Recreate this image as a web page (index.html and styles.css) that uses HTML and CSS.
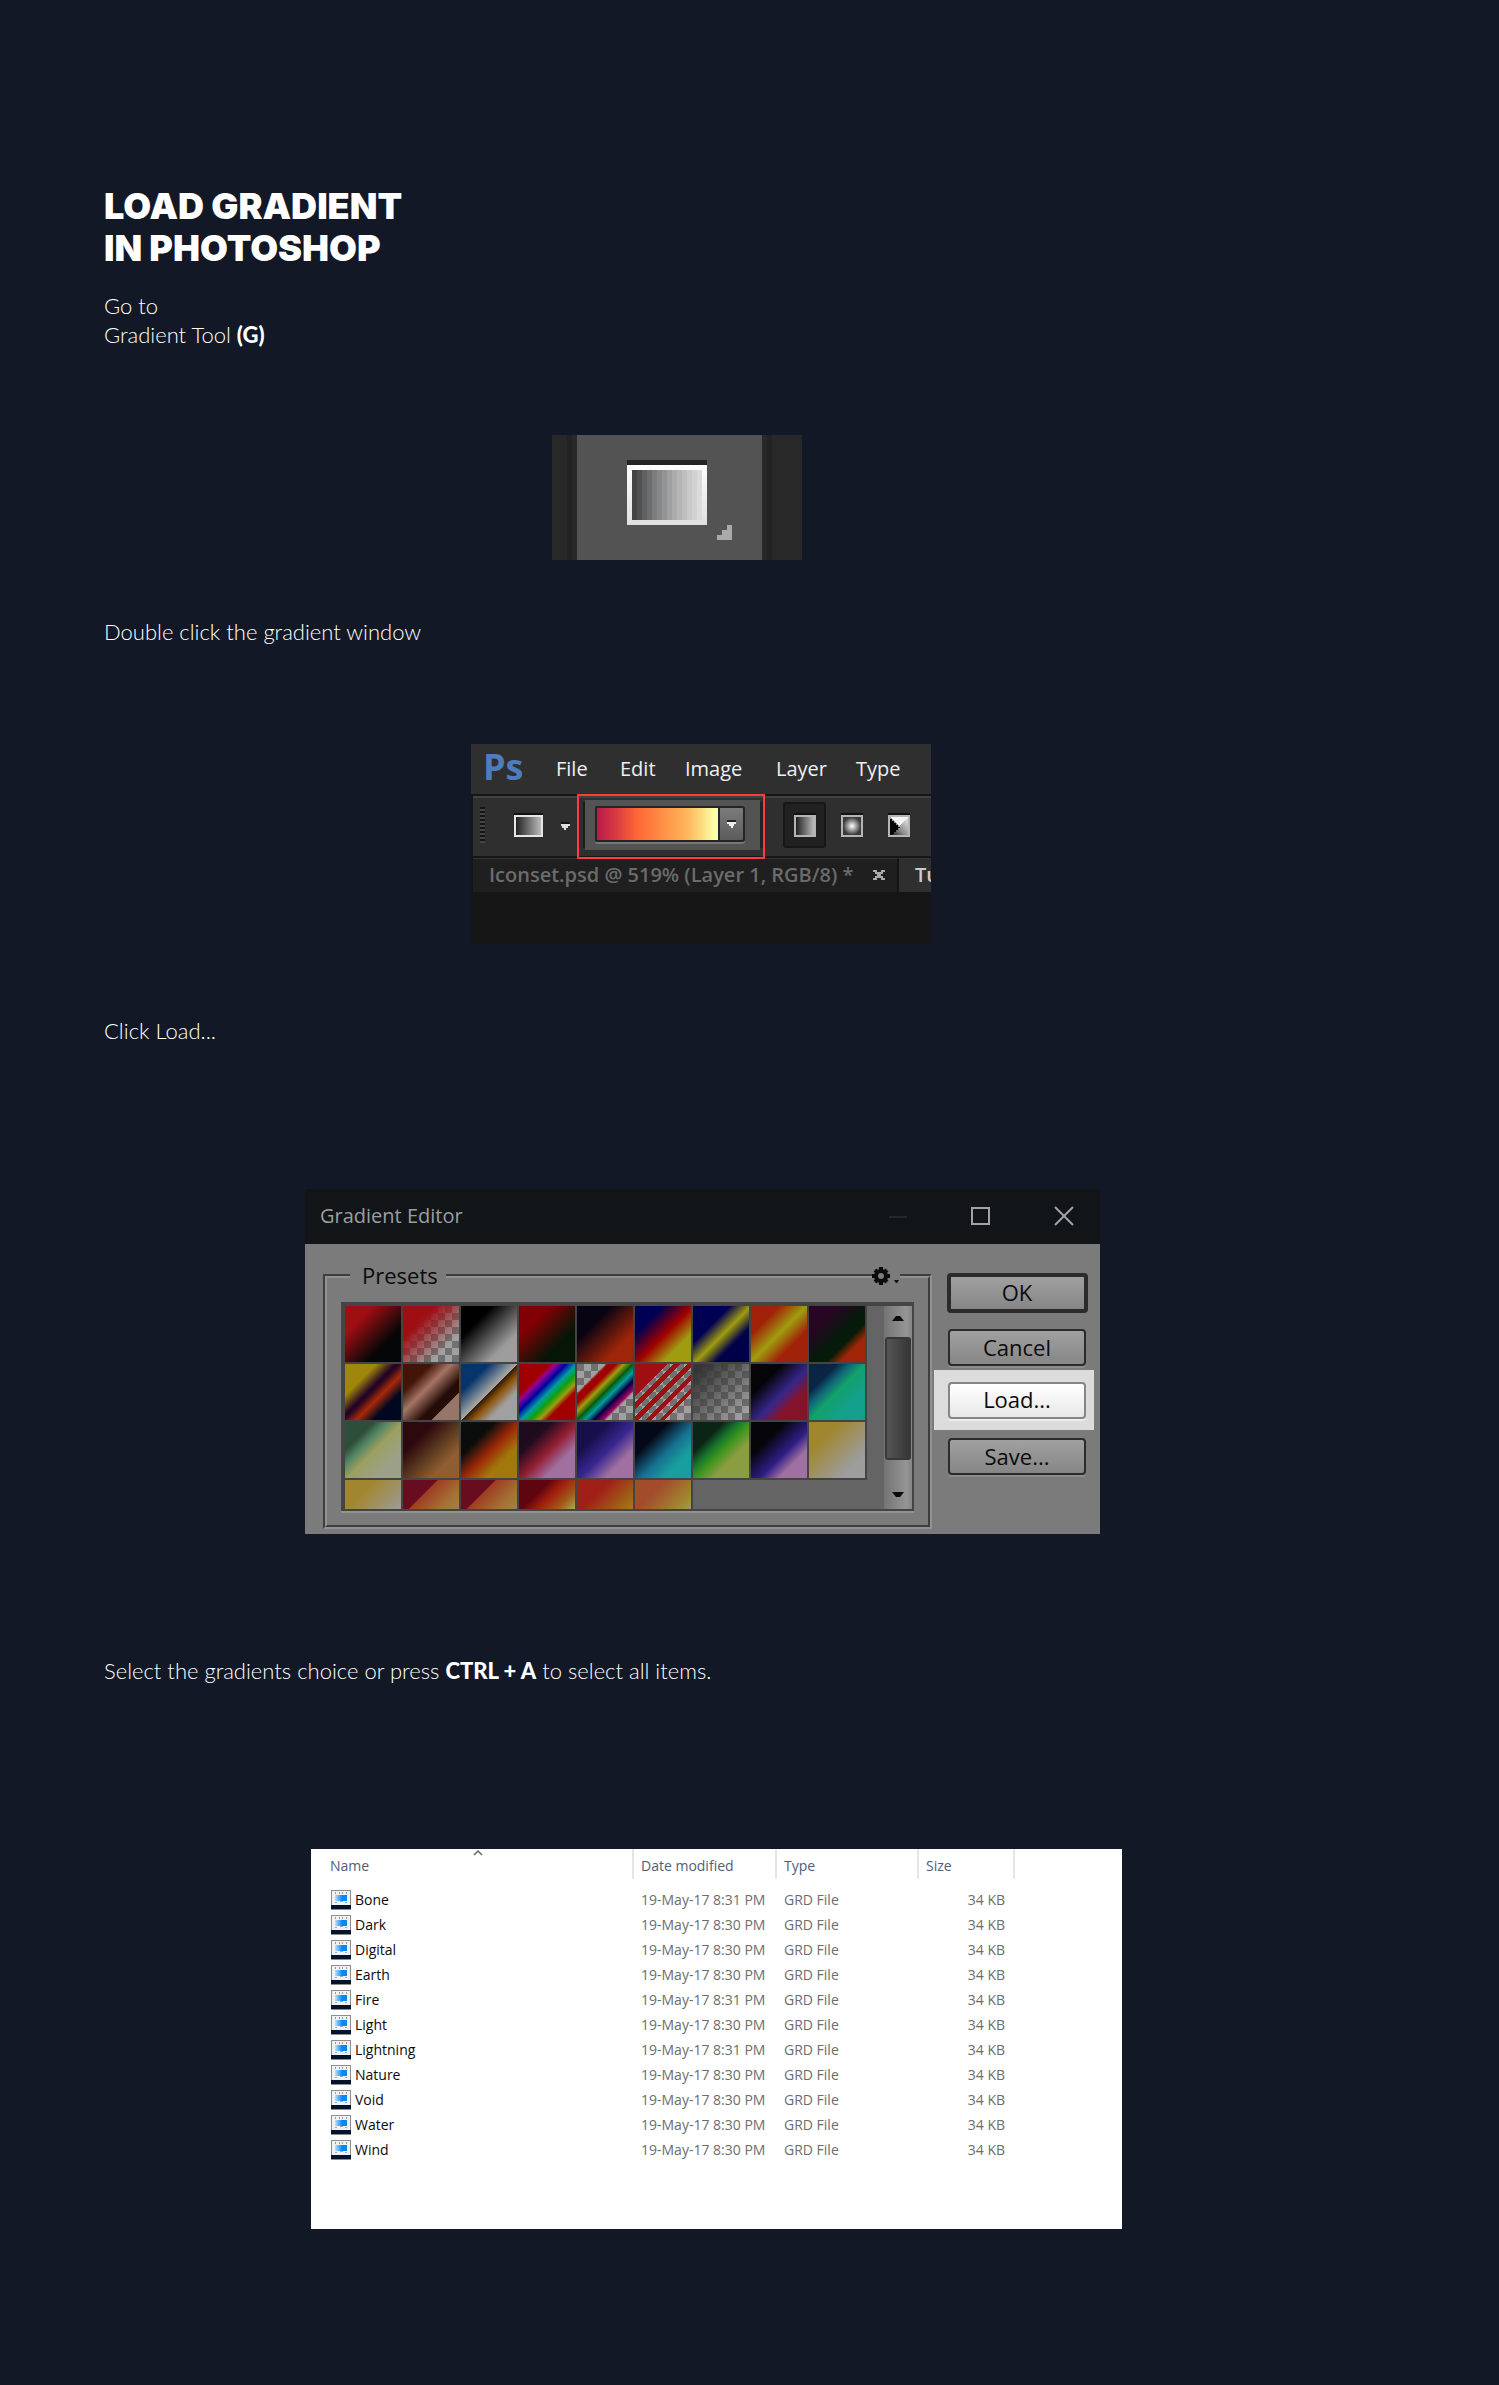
FILE: index.html
```html
<!DOCTYPE html>
<html lang="en">
<head>
<meta charset="utf-8">
<meta name="viewport" content="width=device-width, initial-scale=1">
<title>Load gradient in Photoshop</title>
<link rel="stylesheet" href="styles.css">
</head>
<body>
<main class="guide">
  <h1 class="title">LOAD GRADIENT<br>IN PHOTOSHOP</h1>
  <p class="step">Go to<br>Gradient Tool <strong>(G)</strong></p>

  <figure class="shot tool">
    <svg viewBox="0 0 50 25" shape-rendering="crispEdges" role="img" aria-label="Gradient tool">
      <defs><linearGradient id="frame" x1="0" y1="0" x2="0" y2="1"><stop offset="0" stop-color="#fdfdfd"/><stop offset="1" stop-color="#e0e0e0"/></linearGradient></defs>
      <path fill="#282828" d="M0 0h50v25H0z"/>
      <path fill="#232323" d="M3 0h1v25H3zM43 0h1v25h-1z"/>
      <path fill="#535353" d="M5 0h37v25H5z"/>
      <path fill="#232323" d="M15 5h16v1H15z"/>
      <path fill="url(#frame)" d="M15 6h16v12H15z"/>
      <path fill="#444446" d="M16 7h1v10h-1z"/><path fill="#515152" d="M17 7h1v10h-1z"/>
      <path fill="#5f6061" d="M18 7h1v10h-1z"/><path fill="#6d6e6f" d="M19 7h1v10h-1z"/>
      <path fill="#7b7c7d" d="M20 7h1v10h-1z"/><path fill="#878889" d="M21 7h1v10h-1z"/>
      <path fill="#939495" d="M22 7h1v10h-1z"/><path fill="#9fa0a1" d="M23 7h1v10h-1z"/>
      <path fill="#abacac" d="M24 7h1v10h-1z"/><path fill="#b5b5b5" d="M25 7h1v10h-1z"/>
      <path fill="#bfbfbf" d="M26 7h1v10h-1z"/><path fill="#c9c9c9" d="M27 7h1v10h-1z"/>
      <path fill="#d2d2d2" d="M28 7h1v10h-1z"/><path fill="#dbdbdb" d="M29 7h1v10h-1z"/>
      <path fill="#aaaaaa" d="M35 18h1v3h-3v-1h1v-1h1z"/>
    </svg>
  </figure>

  <p class="step">Double click the gradient window</p>

  <figure class="shot photoshop">
    <nav class="ps-menu" aria-label="Menu bar">
      <span class="ps-logo">Ps</span>
      <a href="#file">File</a><a href="#edit">Edit</a><a href="#image">Image</a><a href="#layer">Layer</a><a href="#type">Type</a>
    </nav>
    <div class="ps-options">
      <span class="grip"></span>
      <button class="icon-btn preset" type="button" aria-label="Gradient tool presets">
        <svg width="58" height="24" viewBox="0 0 58 24" shape-rendering="crispEdges">
          <defs><linearGradient id="dl"><stop offset="0" stop-color="#222"/><stop offset="1" stop-color="#bbb"/></linearGradient></defs>
          <path fill="#111" d="M0 0h29v2H0z"/><path fill="#e6e6e6" d="M0 2h29v22H0z"/><path fill="url(#dl)" d="M2 4h25v18H2z"/>
          <path fill="#151515" d="M47 9h9v2h-9z"/><path fill="#ddd" d="M47 11h9v2h-2v2h-2v2h-2v-2h-2v-2h-1z"/>
        </svg>
      </button>
      <div class="picker">
        <button class="ramp" type="button" aria-label="Edit gradient"></button>
        <button class="ramp-menu" type="button" aria-label="Choose gradient">
          <svg width="9" height="8" viewBox="0 0 9 8" shape-rendering="crispEdges"><path fill="#222" d="M0 0h9v2H0z"/><path fill="#eee" d="M0 2h9v2H7v2H6v2H4V6H2V4H0z"/></svg>
        </button>
      </div>
      <button class="icon-btn kind selected" type="button" aria-label="Linear gradient">
        <svg width="22" height="24" viewBox="0 0 22 24" shape-rendering="crispEdges"><path fill="#111" d="M0 0h22v2H0z"/><path fill="#b5b5b5" d="M0 2h22v22H0z"/><path fill="url(#dl)" d="M2 4h18v18H2z"/></svg>
      </button>
      <button class="icon-btn kind" type="button" aria-label="Radial gradient">
        <svg width="22" height="24" viewBox="0 0 22 24" shape-rendering="crispEdges"><defs><radialGradient id="rg"><stop offset="0" stop-color="#fff"/><stop offset="1" stop-color="#3a3a3a"/></radialGradient></defs><path fill="#111" d="M0 0h22v2H0z"/><path fill="#b5b5b5" d="M0 2h22v22H0z"/><path fill="url(#rg)" d="M2 4h18v18H2z"/></svg>
      </button>
      <button class="icon-btn kind" type="button" aria-label="Angle gradient">
        <svg width="22" height="24" viewBox="0 0 22 24" shape-rendering="crispEdges"><defs><linearGradient id="ag" x1="0" y1="1" x2="1" y2="0"><stop offset="0" stop-color="#111"/><stop offset=".4" stop-color="#888"/><stop offset="1" stop-color="#eee"/></linearGradient></defs><path fill="#111" d="M0 0h22v2H0z"/><path fill="#b5b5b5" d="M0 2h22v22H0z"/><path fill="url(#ag)" d="M2 4h18v18H2z"/><path fill="#f4f4f4" d="M2 4h18l-9 9z"/><path fill="#080808" d="M2 6h2v2h2v2h2v2h2v2h2v1h-2v2H8v2H6v2H4v1H2z"/></svg>
      </button>
      <span class="callout"></span>
    </div>
    <div class="ps-tabs">
      <div class="doc-tab"><span>Iconset.psd @ 519% (Layer 1, RGB/8) *</span>
        <button class="tab-close" type="button" aria-label="Close document"><svg width="12" height="10" viewBox="0 0 12 10" shape-rendering="crispEdges"><path fill="#aaa" d="M0 0h4v2h4V0h4v2h-2v2H8v2h2v2h2v2H8V8H4v2H0V8h2V6h2V4H2V2H0z"/></svg></button>
      </div>
      <div class="doc-tab current"><span>Tu</span></div>
    </div>
  </figure>

  <p class="step">Click Load...</p>

  <figure class="shot editor">
    <header class="editor-bar">
      <span>Gradient Editor</span>
      <div class="window-controls">
        <svg width="20" height="20" viewBox="0 0 20 20" shape-rendering="crispEdges"><path fill="#23282a" d="M1 10h18v2H1z"/></svg>
        <svg width="20" height="20" viewBox="0 0 20 20" shape-rendering="crispEdges"><path fill="none" stroke="#a0a2a3" stroke-width="2" d="M1 2h17v16H1z"/></svg>
        <svg width="20" height="20" viewBox="0 0 20 20"><path fill="none" stroke="#a0a2a3" stroke-width="2" d="M1 1l18 18M19 1L1 19"/></svg>
      </div>
    </header>
    <div class="editor-body">
      <fieldset class="presets">
        <legend>Presets</legend>
        <button class="gear" type="button" aria-label="Preset options">
          <svg width="28" height="20" viewBox="0 0 28 20"><path fill="none" stroke="#0b0b0b" stroke-width="4" d="M9 4a5 5 0 1 1 0 10a5 5 0 1 1 0-10z"/><path stroke="#0b0b0b" stroke-width="4" d="M9 0v3M9 15v3M0 9h3M15 9h3M3 3l2 2M13 13l2 2M15 3l-2 2M5 13l-2 2"/><path fill="#0b0b0b" d="M22 13h5l-2 3h-1z"/></svg>
        </button>
        <div class="swatch-box">
          <ul class="swatches" aria-label="Gradient presets">
            <li class="g1"></li><li class="g2"></li><li class="g3"></li><li class="g4"></li><li class="g5"></li><li class="g6"></li><li class="g7"></li><li class="g8"></li><li class="g9"></li>
            <li class="g10"></li><li class="g11"></li><li class="g12"></li><li class="g13"></li><li class="g14"></li><li class="g15"></li><li class="g16"></li><li class="g17"></li><li class="g18"></li>
            <li class="g19"></li><li class="g20"></li><li class="g21"></li><li class="g22"></li><li class="g23"></li><li class="g24"></li><li class="g25"></li><li class="g26"></li><li class="g27"></li>
            <li class="g27"></li><li class="g28"></li><li class="g28"></li><li class="g29"></li><li class="g30"></li><li class="g31"></li>
          </ul>
          <div class="scrollbar">
            <svg width="12" height="6" viewBox="0 0 12 6"><path fill="#0b0b0b" d="M0 6l4-5h4l4 5z"/></svg>
            <span class="thumb"></span>
            <svg width="12" height="6" viewBox="0 0 12 6"><path fill="#0b0b0b" d="M0 0l4 5h4l4-5z"/></svg>
          </div>
        </div>
      </fieldset>
      <div class="actions">
        <button class="btn default" type="button">OK</button>
        <button class="btn" type="button">Cancel</button>
        <div class="spot"><button class="btn" type="button">Load...</button></div>
        <button class="btn" type="button">Save...</button>
      </div>
    </div>
  </figure>

  <p class="step">Select the gradients choice or press <strong>CTRL + A</strong> to select all items.</p>

  <svg class="symbols" aria-hidden="true">
    <defs>
      <linearGradient id="blue"><stop offset="0" stop-color="#b9e2ff"/><stop offset=".6" stop-color="#0a86f0"/></linearGradient>
      <symbol id="grd" viewBox="0 0 20 20"><path fill="#8d8d8d" d="M0 0h20v20H0z"/><path fill="#f1f1f1" d="M1 1h18v14H1z"/><path fill="#999" d="M4 2h1v2H4zM8 2h1v2H8zM11 2h1v2h-1zM15 2h1v2h-1z"/><path fill="url(#blue)" d="M4 5h12v6H4z"/><path fill="#7fb8e6" d="M4 12h2v1H4zM9 11h3v1H9zM14 12h2v1h-2z"/><path fill="#03132b" d="M0 15h20v4H0z"/></symbol>
    </defs>
  </svg>
  <figure class="shot explorer">
    <table class="files">
      <thead><tr><th class="name" scope="col">Name<svg class="sort" width="10" height="6" viewBox="0 0 10 6"><path fill="none" stroke="#666" stroke-width="1.5" d="M1 5l4-4 4 4"/></svg></th><th class="date" scope="col">Date modified</th><th class="type" scope="col">Type</th><th class="size" scope="col">Size</th><th class="rest"></th></tr></thead>
      <tbody>
        <tr><td><svg class="file"><use href="#grd"/></svg>Bone</td><td>19-May-17 8:31 PM</td><td>GRD File</td><td>34 KB</td></tr>
        <tr><td><svg class="file"><use href="#grd"/></svg>Dark</td><td>19-May-17 8:30 PM</td><td>GRD File</td><td>34 KB</td></tr>
        <tr><td><svg class="file"><use href="#grd"/></svg>Digital</td><td>19-May-17 8:30 PM</td><td>GRD File</td><td>34 KB</td></tr>
        <tr><td><svg class="file"><use href="#grd"/></svg>Earth</td><td>19-May-17 8:30 PM</td><td>GRD File</td><td>34 KB</td></tr>
        <tr><td><svg class="file"><use href="#grd"/></svg>Fire</td><td>19-May-17 8:31 PM</td><td>GRD File</td><td>34 KB</td></tr>
        <tr><td><svg class="file"><use href="#grd"/></svg>Light</td><td>19-May-17 8:30 PM</td><td>GRD File</td><td>34 KB</td></tr>
        <tr><td><svg class="file"><use href="#grd"/></svg>Lightning</td><td>19-May-17 8:31 PM</td><td>GRD File</td><td>34 KB</td></tr>
        <tr><td><svg class="file"><use href="#grd"/></svg>Nature</td><td>19-May-17 8:30 PM</td><td>GRD File</td><td>34 KB</td></tr>
        <tr><td><svg class="file"><use href="#grd"/></svg>Void</td><td>19-May-17 8:30 PM</td><td>GRD File</td><td>34 KB</td></tr>
        <tr><td><svg class="file"><use href="#grd"/></svg>Water</td><td>19-May-17 8:30 PM</td><td>GRD File</td><td>34 KB</td></tr>
        <tr><td><svg class="file"><use href="#grd"/></svg>Wind</td><td>19-May-17 8:30 PM</td><td>GRD File</td><td>34 KB</td></tr>
      </tbody>
    </table>
  </figure>
</main>
</body>
</html>
```
FILE: styles.css
```css
* { box-sizing: border-box; }
body { margin: 0; background: #121825; color: #fff; font-family: "Open Sans", "Noto Sans", sans-serif; }
button { padding: 0; border: 0; background: none; color: inherit; font: inherit; }
svg { display: block; }

.guide { padding: 185px 104px 156px; }
.title { margin: 0 0 22px; font: 900 36px/42px Inter, sans-serif; }
.step { margin: 0; padding-bottom: 1px; font: 300 22px/29px Lato, sans-serif; }
.step strong { font-weight: 900; }
.shot { max-width: 100%; }

/* Toolbox button, enlarged */
.tool { width: 250px; margin: 85px 0 57px 448px; }

/* Photoshop window */
.photoshop { width: 460px; margin: 97px 0 72px 367px; padding-bottom: 52px; background: #161616; overflow: hidden; font-size: 20px; }
.ps-menu { display: grid; grid-template-columns: 73px 64px 65px 91px 80px auto; align-items: center; height: 50px; padding-left: 12px; background: #2f2f2f; line-height: 28px; }
.ps-menu a { color: #f0f0f0; text-decoration: none; }
.ps-logo { padding-bottom: 4px; color: #4d7dbd; font-size: 36px; font-weight: 700; line-height: 46px; }
.ps-options { position: relative; display: flex; align-items: center; height: 64px; margin-left: 2px; padding-bottom: 2px; border: solid #161616; border-width: 2px 0; background: #2f2f2f; box-shadow: inset 0 2px #414141; }
.grip { width: 5px; height: 36px; margin-left: 7px; background: repeating-linear-gradient(#151515 0 2px, #444 2px 4px); }
.preset { margin: 0 13px 0 29px; }
.picker { display: flex; width: 175px; height: 50px; padding: 6px 15px 8px 10px; background: #535353; box-shadow: -4px 0 0 -2px #1c1c1c, 7px 0 0 -2px #222; }
.ramp { width: 123px; border: 2px solid #252525; border-right: 0; border-radius: 2px 0 0 2px; background: linear-gradient(90deg, #bb1f48 2%, #d63a42 15%, #ff6535 33%, #ff9547 57%, #ffb95f 76%, #fde78b 90%, #fbffa9 97%); box-shadow: 0 2px #777; }
.ramp-menu { display: grid; place-items: center; width: 27px; border: 2px solid #252525; border-radius: 0 3px 3px 0; background: linear-gradient(#7b7b7b, #5c5c5c); box-shadow: 0 2px #777; }
.kind { display: grid; place-items: center; width: 43px; height: 46px; margin-right: 4px; }
.selected { margin-left: 23px; border: 2px solid #171717; border-radius: 3px; background: #212121; }
.callout { position: absolute; top: -2px; left: 104px; width: 188px; height: 65px; border: 2px solid #ff3b3b; z-index: 1; }
.ps-tabs { display: flex; height: 34px; margin-left: 2px; font-size: 20px; font-weight: 600; line-height: 31px; }
.doc-tab { display: flex; flex: none; align-items: center; width: 426px; padding: 0 0 2px 16px; border-top: 1px solid #333; border-right: 2px solid #141414; background: #1f1f1f; color: #6b6b6b; white-space: nowrap; }
.doc-tab span { flex: none; width: 384px; }
.doc-tab.current { background: #2f2f2f; color: #ccc; }

/* Gradient editor dialog */
.editor { width: 795px; margin: 143px 0 122px 201px; background: #7b7b7b; color: #0b0b0b; }
.editor-bar { display: flex; align-items: center; justify-content: space-between; height: 55px; padding: 0 26px 2px 15px; background: #111517; color: #9a9fa0; font-size: 20px; }
.window-controls { display: flex; gap: 63px; }
.editor-body { display: flex; align-items: flex-start; gap: 2px; padding: 17px 6px 5px 18px; }
.presets { position: relative; flex: 1; height: 268px; min-width: 0; margin: 0; padding: 0 14px; border: 4px groove #929292; }
.presets legend { margin: 0 0 11px 9px; padding: 0 8px 2px 12px; font-size: 22px; line-height: 28px; }
.gear { position: absolute; top: -35px; right: 28px; background: #7b7b7b; }
.swatch-box { display: flex; justify-content: space-between; height: 209px; border: solid #444; border-width: 4px 2px 2px 4px; background: #646464; box-shadow: 0 2px #929292; overflow: hidden; }
.swatches { display: grid; flex: none; grid-template-columns: repeat(9, 58px); grid-auto-rows: 58px; margin: 0; padding: 0; list-style: none; }
.swatches li { border: solid #444; border-width: 0 2px 2px 0; background-origin: content-box; }
.scrollbar { display: flex; flex-direction: column; align-items: center; justify-content: space-between; width: 28px; padding: 9px 0 11px; background: linear-gradient(90deg, #747474, #959595 80%, #858585); }
.thumb { width: 26px; height: 123px; margin-bottom: 16px; border: 2px solid #383838; border-radius: 3px; background: linear-gradient(90deg, #555, #373737); }
.actions { display: grid; width: 160px; justify-items: center; padding: 12px 0 0 6px; }
.btn { width: 138px; height: 37px; padding-bottom: 2px; border: 2px solid #2b2b2b; border-radius: 4px; background: linear-gradient(#a0a0a0, #868686); box-shadow: 0 2px #8c8c8c; color: #0b0b0b; font-size: 22px; line-height: 30px; }
.btn.default { width: 141px; height: 40px; margin-bottom: 16px; border-width: 4px; line-height: 28px; box-shadow: none; }
.spot { display: grid; place-items: center; width: 160px; height: 60px; margin: 4px 0 8px -6px; padding-left: 6px; background: #dcdcdc; }
.spot .btn { border-color: #858585; background: linear-gradient(#fff, #e8e8e8); box-shadow: 0 2px #eee; }

.g1 { background: linear-gradient(135deg, #9f0e12 25%, #050607 70%); }
.g2 { background: linear-gradient(135deg, #9f0e12 28%, #9f0e1200 75%), repeating-conic-gradient(#a0a0a0 0 25%, #707070 0 50%) 0 0 / 14px 14px; }
.g3 { background: linear-gradient(135deg, #000 28%, #9d9d9d 75%); }
.g4 { background: linear-gradient(135deg, #800005 28%, #051607 70%); }
.g5 { background: linear-gradient(135deg, #080412 30%, #9f2508 75%); }
.g6 { background: linear-gradient(135deg, #000052 25%, #a00000 52%, #a09c10 75%); }
.g7 { background: linear-gradient(135deg, #000052 33%, #a09c10 52%, #000048 70%); }
.g8 { background: linear-gradient(135deg, #a02208 25%, #a09c10 50%, #a02208 72%); }
.g9 { background: linear-gradient(135deg, #270523 25%, #041a0a 55%, #061b08 65%, #a02508 78%); }
.g10 { background: linear-gradient(135deg, #a0860c 28%, #250524 45%, #250524 48%, #a82a08 60%, #000720 75%); }
.g11 { background: linear-gradient(135deg, #431408 25%, #a47565 43%, #240c07 65%, #240c07 75%, #957669 76%); }
.g12 { background: linear-gradient(135deg, #07356b 25%, #a8a8a4 50%, #301b07 51%, #8b510a 60%, #a0a0a0 75%); }
.g13 { background: linear-gradient(135deg, #a00000 28%, #980097 33%, #0000a0 42%, #00a0a0 52%, #0ea00c 60%, #a09c10 68%, #a00000 75%); }
.g14 { background: linear-gradient(135deg, #80808000 25%, #a00000 28% 35%, #a09c10 42%, #075b0c 50%, #00a0a0 57%, #000040 65%, #a00062 73%, #80808000 76%), repeating-conic-gradient(#a0a0a0 0 25%, #707070 0 50%) 0 0 / 14px 14px; }
.g15 { background: linear-gradient(135deg, #9f0e12 29%, #0000 0 34%, #9f0e12 0 41%, #0000 0 47%, #9f0e12 0 53%, #0000 0 59%, #9f0e12 0 65%, #0000 0 72%, #9f0e12 0 76%, #0000 0), repeating-conic-gradient(#a0a0a0 0 25%, #707070 0 50%) 0 0 / 14px 14px; }
.g16 { background: linear-gradient(135deg, #353535 10%, #35353500 90%), repeating-conic-gradient(#a0a0a0 0 25%, #707070 0 50%) 0 0 / 14px 14px; }
.g17 { background: linear-gradient(135deg, #050509 28%, #36268a 55%, #86122a 72%); }
.g18 { background: linear-gradient(135deg, #0a2544 25%, #116579 37%, #12a06c 50%, #12a08d 75%); }
.g19 { background: linear-gradient(135deg, #2c4e3b 25%, #558663 38%, #9ca060 52%, #9ca086 75%); }
.g20 { background: linear-gradient(135deg, #2c090d 28%, #5f3d20 55%, #905d30 75%); }
.g21 { background: linear-gradient(135deg, #0b0d0d 30%, #9f2b08 53%, #a0780c 72%); }
.g22 { background: linear-gradient(135deg, #1e0b1d 28%, #921d31 52%, #a070a0 73%); }
.g23 { background: linear-gradient(135deg, #15104b 28%, #392791 53%, #a070a0 75%); }
.g24 { background: linear-gradient(135deg, #050818 30%, #176f91 55%, #189f9d 75%); }
.g25 { background: linear-gradient(135deg, #0a2416 27%, #1a792c 42%, #3d961c 52%, #8a9d40 68%); }
.g26 { background: linear-gradient(135deg, #050509 30%, #2f1d86 58%, #a070a0 75%); }
.g27 { background: linear-gradient(135deg, #a18630 27%, #9d9d9d 78%); }
.g28 { background: linear-gradient(135deg, #680c20 30%, #a03d24 32%, #a37535 60%, #a08c60); }
.g29 { background: linear-gradient(135deg, #5e0510 28%, #a01d0c 42%, #a05a18 60%, #a8a550 75%); }
.g30 { background: linear-gradient(135deg, #a02018 30%, #a07c15 75%); }
.g31 { background: linear-gradient(135deg, #a24c2b 28%, #a08c30 65%, #9d9d70 80%); }

/* File list */
.symbols { position: absolute; width: 0; height: 0; }
.explorer { width: 811px; margin: 163px 0 0 207px; padding-bottom: 66px; background: #fff; color: #6d6d6d; }
.files { width: 100%; border-collapse: separate; border-spacing: 0; table-layout: fixed; font-size: 14px; line-height: 20px; }
.files th { position: relative; height: 30px; padding: 4px 0 0 7px; border-right: 2px solid #e5e5e5; color: #4c607a; font-weight: 400; text-align: left; }
.files .rest { border: 0; }
.files tbody::before { content: ""; display: block; height: 9px; }
.files td { height: 25px; padding: 0 0 2px 7px; }
.files .name { width: 323px; padding-left: 19px; }
.files .date { width: 143px; }
.files .type { width: 142px; }
.files .size { width: 96px; }
.files td:first-child { display: flex; align-items: center; gap: 4px; padding-left: 20px; color: #0b0b0b; }
.files td:last-child { padding-right: 10px; text-align: right; }
.file { width: 20px; height: 20px; }
.sort { position: absolute; top: 1px; left: 162px; }
```
